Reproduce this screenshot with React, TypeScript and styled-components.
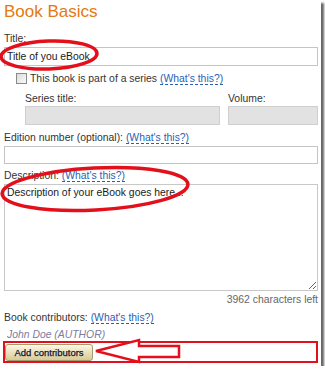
import styled, { createGlobalStyle } from "styled-components";

const GlobalStyle = createGlobalStyle`
  html, body {
    margin: 0;
    padding: 0;
    background: #fff;
  }
  body {
    font-family: "Liberation Sans", Arial, sans-serif;
    font-size: 10.4px;
    color: #333;
  }
`;

const Frame = styled.div`
  position: relative;
  width: 321px;
  height: 366px;
  box-sizing: border-box;
  padding: 0 3px 0 4px;
  background: #fff;
  box-shadow: 3px 3px 2px rgba(0, 0, 0, 0.6);
  display: flex;
  flex-direction: column;
`;

const Heading = styled.h1`
  margin: 0;
  padding-top: 2px;
  font-size: 17px;
  line-height: 20px;
  font-weight: normal;
  color: #e47911;
`;

const Label = styled.div<{ $mt?: number }>`
  margin-top: ${p => (p.$mt ? p.$mt : 0)}px;
  line-height: 13px;
  color: #333;
  white-space: nowrap;
`;

const Link = styled.span`
  color: #2b5fb3;
  border-bottom: 1px dashed #2b5fb3;
  line-height: 11px;
  display: inline-block;
`;

const Field = styled.div<{ $h: number; $disabled?: boolean }>`
  box-sizing: border-box;
  height: ${p => p.$h}px;
  margin-top: 2px;
  padding: 0 2px;
  border: 1px solid ${p => (p.$disabled ? "#cfcfcf" : "#c4c4c4")};
  background: ${p => (p.$disabled ? "#e2e2e2" : "#fff")};
  color: #1a1a1a;
  line-height: ${p => p.$h - 2}px;
`;

const CheckRow = styled.div`
  margin-top: 6px;
  display: flex;
  align-items: center;
  gap: 3px;
  padding-left: 12px;
  line-height: 13px;
`;

const CheckBox = styled.span`
  width: 9px;
  height: 9px;
  border: 1px solid #8a8a8a;
  background: linear-gradient(135deg, #dcdcdc, #fafafa);
`;

const SeriesGrid = styled.div`
  margin-top: 7px;
  padding-left: 21px;
  display: grid;
  grid-template-columns: 1fr 90px;
  column-gap: 8px;
  line-height: 13px;

  ${Field} {
    margin-top: 1px;
  }
`;

const TextArea = styled.textarea`
  display: block;
  box-sizing: border-box;
  width: 100%;
  height: 107px;
  margin-top: 2px;
  padding: 1px 2px;
  border: 1px solid #c8c8c8;
  font-family: "Liberation Sans", Arial, sans-serif;
  font-size: 10.4px;
  line-height: 13px;
  color: #1a1a1a;
  resize: vertical;
  outline: none;
`;

const CharsLeft = styled.div`
  margin-top: 2px;
  text-align: right;
  line-height: 13px;
  color: #666;
`;

const Contributor = styled.div`
  margin-top: 4px;
  padding-left: 3px;
  line-height: 13px;
  font-style: italic;
  color: #7c7c9c;
`;

const ButtonBox = styled.div`
  margin-left: -1px;
  height: 22px;
  box-sizing: border-box;
  border: 2px solid #e0101c;
  padding: 1px 0;
  display: flex;
`;

const AddButton = styled.button`
  width: 88px;
  height: 17px;
  padding: 0;
  border: 1px solid #a59a6c;
  border-radius: 3px;
  background: linear-gradient(#fbf7e6, #e8dfb8 55%, #d6cb98);
  font-family: "Liberation Sans", Arial, sans-serif;
  font-size: 9.5px;
  color: #0f1236;
  line-height: 15px;
  -webkit-text-stroke: 0.25px #0f1236;
`;

const Overlay = styled.svg`
  position: absolute;
  left: 0;
  top: 0;
  width: 321px;
  height: 366px;
  pointer-events: none;
`;

export default function App() {
  return (
    <>
      <GlobalStyle />
      <Frame>
        <Heading>Book Basics</Heading>

        <Label $mt={10}>Title:</Label>
        <Field $h={19}>Title of you eBook</Field>

        <CheckRow>
          <CheckBox />
          <span>
            This book is part of a series <Link>(What's this?)</Link>
          </span>
        </CheckRow>

        <SeriesGrid>
          <span>Series title:</span>
          <span>Volume:</span>
          <Field $h={19} $disabled />
          <Field $h={19} $disabled />
        </SeriesGrid>

        <Label $mt={6}>
          Edition number (optional): <Link>(What's this?)</Link>
        </Label>
        <Field $h={18} />

        <Label $mt={5}>
          Description: <Link>(What's this?)</Link>
        </Label>
        <TextArea readOnly defaultValue="Description of your eBook goes here..." />
        <CharsLeft>3962 characters left</CharsLeft>

        <Label $mt={5}>
          Book contributors: <Link>(What's this?)</Link>
        </Label>
        <Contributor>John Doe (AUTHOR)</Contributor>

        <ButtonBox>
          <AddButton>Add contributors</AddButton>
        </ButtonBox>

        <Overlay viewBox="0 0 321 366">
          <g fill="none" stroke="#e3101c" strokeWidth={3.5}>
            <ellipse cx={49} cy={55} rx={48} ry={14} transform="rotate(-2 49 55)" />
            <ellipse cx={95} cy={189} rx={93} ry={21} transform="rotate(-3 95 189)" />
          </g>
          <path
            d="M96 351 L139 340 L139 346 L179 346 L179 357 L139 357 L139 362 Z"
            fill="#fff"
            stroke="#e3101c"
            strokeWidth={2.5}
            strokeLinejoin="miter"
          />
        </Overlay>
      </Frame>
    </>
  );
}
